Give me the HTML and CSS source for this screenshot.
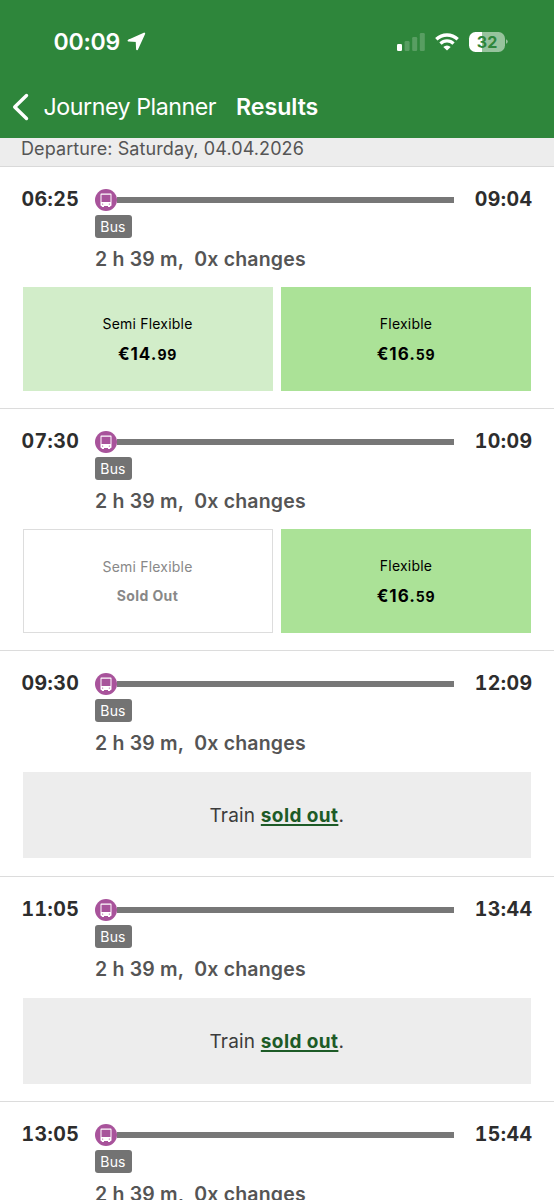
FILE: index.html
```html
<!DOCTYPE html>
<html lang="en">
<head>
<meta charset="utf-8">
<title>Journey Planner – Results</title>
<link rel="stylesheet" href="styles.css">
</head>
<body>
<svg class="defs" aria-hidden="true">
  <symbol id="bus" viewBox="0 0 22 22">
    <circle cx="11" cy="11" r="11" fill="#a8539b"/>
    <path fill="#fff" fill-rule="evenodd" d="M6.200 4.600h9.600q.7 0 .7.7v11q0 .7-.7.7h-.6v1h-2.200v-1H9v1H6.800v-1h-.6q-.7 0-.7-.7V5.300q0-.7.7-.7zM6.500 5.700v7.300h9V5.700zM7.700 14.500a.6.6 0 1 0 0 1.200.6.6 0 0 0 0-1.200zM14.300 14.500a.6.6 0 1 0 0 1.200.6.6 0 0 0 0-1.200z"/>
  </symbol>
</svg>
<header class="header">
  <div class="status">
    <span class="clock">00:09</span>
    <svg class="location" viewBox="0 0 19 19"><path fill="#fff" stroke="#fff" stroke-width="2" stroke-linejoin="round" d="M17.200 1.600 1.600 8.600l8.100.5.400 8.100z"/></svg>
    <svg class="signal" viewBox="0 0 28 18">
      <rect x="0" y="11" width="5" height="7" rx="1.300" fill="#fff"/>
      <g fill="#fff" opacity=".2"><rect x="7.600" y="8" width="5" height="10" rx="1.300"/><rect x="15.200" y="4" width="5" height="14" rx="1.300"/><rect x="22.800" y="0" width="5" height="18" rx="1.300"/></g>
    </svg>
    <svg class="wifi" viewBox="0 0 24 18">
      <g fill="none" stroke="#fff" stroke-width="3.300"><path d="M1.300 6.300a15.400 15.400 0 0 1 21.400 0"/><path d="M5.500 10.600a9.300 9.300 0 0 1 13 0"/></g>
      <path fill="#fff" d="M12 17.600 8.300 14a5.200 5.200 0 0 1 7.400 0z"/>
    </svg>
    <div class="battery"><span class="level">32</span><svg class="cap" viewBox="0 0 3 7"><path d="M0 0q2.600.9 2.600 3.500T0 7z" fill="#fff" opacity=".5"/></svg></div>
  </div>
  <nav class="nav">
    <svg class="back" viewBox="0 0 17 28"><path d="M14.500 2.500 2.700 14l11.800 11.500" fill="none" stroke="#fff" stroke-width="3.400" stroke-linecap="round" stroke-linejoin="round"/></svg>
    <span class="parent">Journey Planner</span>
    <span class="current">Results</span>
  </nav>
</header>
<div class="date"><span>Departure: Saturday, 04.04.2026</span></div>
<main>
  <section class="trip fares-trip">
    <div class="route"><time class="time">06:25</time><div class="track"><svg class="bus"><use href="#bus"/></svg><i class="line"></i></div><time class="time">09:04</time></div>
    <div class="badge">Bus</div>
    <div class="duration">2 h 39 m,&nbsp; 0x changes</div>
    <div class="fares">
      <div class="fare semi"><span class="name">Semi Flexible</span><b class="price">€14.<small>99</small></b></div>
      <div class="fare flex"><span class="name">Flexible</span><b class="price">€16.<small>59</small></b></div>
    </div>
  </section>
  <section class="trip fares-trip">
    <div class="route"><time class="time">07:30</time><div class="track"><svg class="bus"><use href="#bus"/></svg><i class="line"></i></div><time class="time">10:09</time></div>
    <div class="badge">Bus</div>
    <div class="duration">2 h 39 m,&nbsp; 0x changes</div>
    <div class="fares">
      <div class="fare gone"><span class="name">Semi Flexible</span><b class="none">Sold Out</b></div>
      <div class="fare flex"><span class="name">Flexible</span><b class="price">€16.<small>59</small></b></div>
    </div>
  </section>
  <section class="trip">
    <div class="route"><time class="time">09:30</time><div class="track"><svg class="bus"><use href="#bus"/></svg><i class="line"></i></div><time class="time">12:09</time></div>
    <div class="badge">Bus</div>
    <div class="duration">2 h 39 m,&nbsp; 0x changes</div>
    <div class="notice"><span>Train <a class="link">sold out</a>.</span></div>
  </section>
  <section class="trip">
    <div class="route"><time class="time">11:05</time><div class="track"><svg class="bus"><use href="#bus"/></svg><i class="line"></i></div><time class="time">13:44</time></div>
    <div class="badge">Bus</div>
    <div class="duration">2 h 39 m,&nbsp; 0x changes</div>
    <div class="notice"><span>Train <a class="link">sold out</a>.</span></div>
  </section>
  <section class="trip last">
    <div class="route"><time class="time">13:05</time><div class="track"><svg class="bus"><use href="#bus"/></svg><i class="line"></i></div><time class="time">15:44</time></div>
    <div class="badge">Bus</div>
    <div class="duration">2 h 39 m,&nbsp; 0x changes</div>
  </section>
</main>
</body>
</html>
```
FILE: styles.css
```css
* { box-sizing: border-box; }
body {
  margin: 0;
  width: 554px;
  height: 1200px;
  overflow: hidden;
  background: #fff;
  color: #2d2d2d;
  font-family: Inter, "Liberation Sans", sans-serif;
}
svg { display: block; flex: none; }
.defs { position: absolute; width: 0; height: 0; }
.header { height: 137.500px; background: #2e863b; color: #fff; }
.status { display: flex; align-items: center; height: 76px; padding: 7px 46px 0 53.500px; }
.clock { width: 67.500px; font-size: 23px; font-weight: 600; letter-spacing: -0.2px; white-space: nowrap; }
.location { width: 19px; height: 19px; margin-left: 6px; }
.signal { width: 28px; height: 18px; margin-left: auto; }
.wifi { width: 24px; height: 18px; margin-left: 10px; }
.battery { display: flex; align-items: center; gap: 1px; margin: 0 0 0 10px; }
.level {
  width: 36px;
  height: 20px;
  border-radius: 6.5px;
  background: linear-gradient(90deg, #fff 13px, #97c39d 13px);
  color: #2e863b;
  font-size: 16px;
  font-weight: 700;
  line-height: 20.5px;
  text-align: center;
}
.cap { width: 2px; height: 7px; }
.nav { display: flex; align-items: center; height: 61px; padding-left: 12px; font-size: 23.200px; }
.back { width: 17px; height: 28px; }
.parent { width: 192.500px; margin-left: 14.500px; white-space: nowrap; letter-spacing: -0.45px; }
.current { font-weight: 600; letter-spacing: -.05px; }
.date {
  height: 29.500px;
  padding-left: 21px;
  border-bottom: 1px solid #d9d9d9;
  background: #ededed;
  color: #555;
  font-size: 18px;
  letter-spacing: .1px;
  line-height: 22px;
}
.trip { height: 225.5px; padding: 19px 22px 0; border-bottom: 1.5px solid #dcdcdc; }
.fares-trip { height: 242.2px; }
.last { height: 99px; overflow: hidden; border: 0; }
.route { display: flex; align-items: center; height: 27px; }
.time { width: 73px; margin: 0 -.5px; padding-bottom: 1px; font-size: 19.500px; font-weight: 650; font-variant-numeric: tabular-nums; letter-spacing: .4px; white-space: nowrap; }
.time:last-child { flex: 1; text-align: right; }
.track { display: flex; align-items: center; width: 359.500px; margin-left: .5px; padding-top: 1px; }
.bus { width: 22px; height: 22px; }
.line { flex: 1; height: 6px; background: #777; }
.badge {
  width: 37px;
  height: 23px;
  margin: 2px 0 0 72.500px;
  border-radius: 3px;
  background: #737373;
  color: #fff;
  font-size: 14px;
  letter-spacing: .2px;
  line-height: 23px;
  text-align: center;
}
.duration { margin: 8px 0 0 73px; height: 27px; color: #555; font-size: 19.500px; font-weight: 640; letter-spacing: .18px; line-height: 26px; white-space: nowrap; }
.fares { display: grid; grid-template-columns: 1fr 1fr; gap: 8.500px; width: 508.500px; margin: 14px 0 0 .5px; }
.fare { display: flex; flex-direction: column; align-items: center; height: 104px; padding-top: 27px; color: #000; }
.semi { background: #d2edc9; }
.flex { background: #abe297; }
.gone { border: 1.500px solid #ddd; color: #888; }
.name { height: 20px; font-size: 14px; letter-spacing: .2px; line-height: 20px; }
.price { margin-top: 8px; font-size: 17px; line-height: 24px; letter-spacing: 1px; }
.price small { font-size: 14px; letter-spacing: .7px; }
.none { margin-top: 8px; font-size: 14px; letter-spacing: .4px; line-height: 22px; }
.notice { display: flex; align-items: center; justify-content: center; width: 508.500px; height: 86px; margin: 15px 0 0 .5px; padding-top: 1px; background: #ededed; color: #3c3c3c; font-size: 19px; letter-spacing: .2px; }
.link { color: #1d5b27; font-weight: 700; letter-spacing: .4px; text-decoration: underline; text-decoration-thickness: 2px; text-underline-offset: 2px; text-decoration-skip-ink: none; }
```
